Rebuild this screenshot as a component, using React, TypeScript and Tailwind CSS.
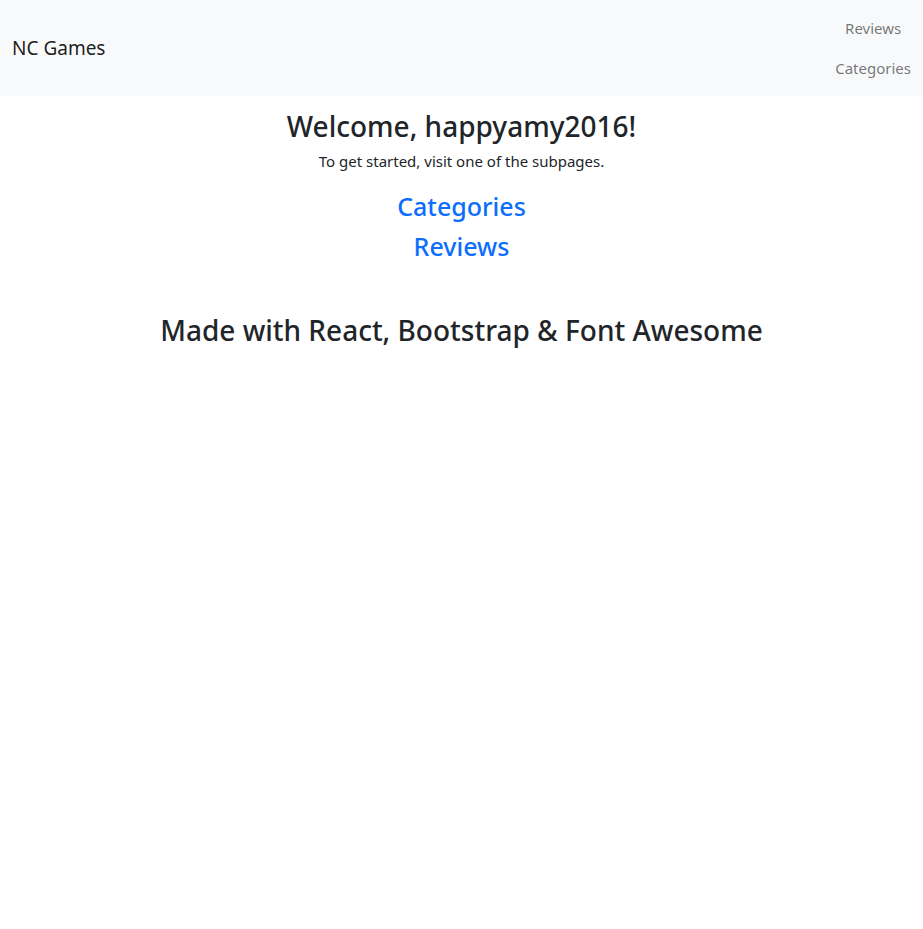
export default function App() {
  return (
    <div className="min-h-[929px] bg-white text-[#212529] font-['Noto_Sans',sans-serif]">
      {/* Navbar */}
      <nav className="flex items-center justify-between bg-[#f8f9fa] px-3 py-2">
        <a href="#" className="text-[19px] leading-[30px] text-black/90">
          NC Games
        </a>
        <div className="flex flex-col items-center">
          <a href="#" className="py-2 text-[15px] leading-6 text-black/55">
            Reviews
          </a>
          <a href="#" className="py-2 text-[15px] leading-6 text-black/55">
            Categories
          </a>
        </div>
      </nav>

      {/* Welcome */}
      <main className="flex flex-col items-center text-center">
        <h2 className="mt-[13px] text-[28px] leading-[34px] font-medium">
          Welcome, happyamy2016!
        </h2>
        <p className="mt-[6px] text-[15px] leading-6">
          To get started, visit one of the subpages.
        </p>

        <div className="mt-[18px] flex flex-col items-center gap-[10px]">
          <a href="#" className="text-[25px] leading-[30px] font-medium text-[#0d6efd]">
            Categories
          </a>
          <a href="#" className="text-[25px] leading-[30px] font-medium text-[#0d6efd]">
            Reviews
          </a>
        </div>

        <h2 className="mt-[52px] text-[28px] leading-[34px] font-medium">
          Made with React, Bootstrap &amp; Font Awesome
        </h2>
      </main>
    </div>
  );
}
